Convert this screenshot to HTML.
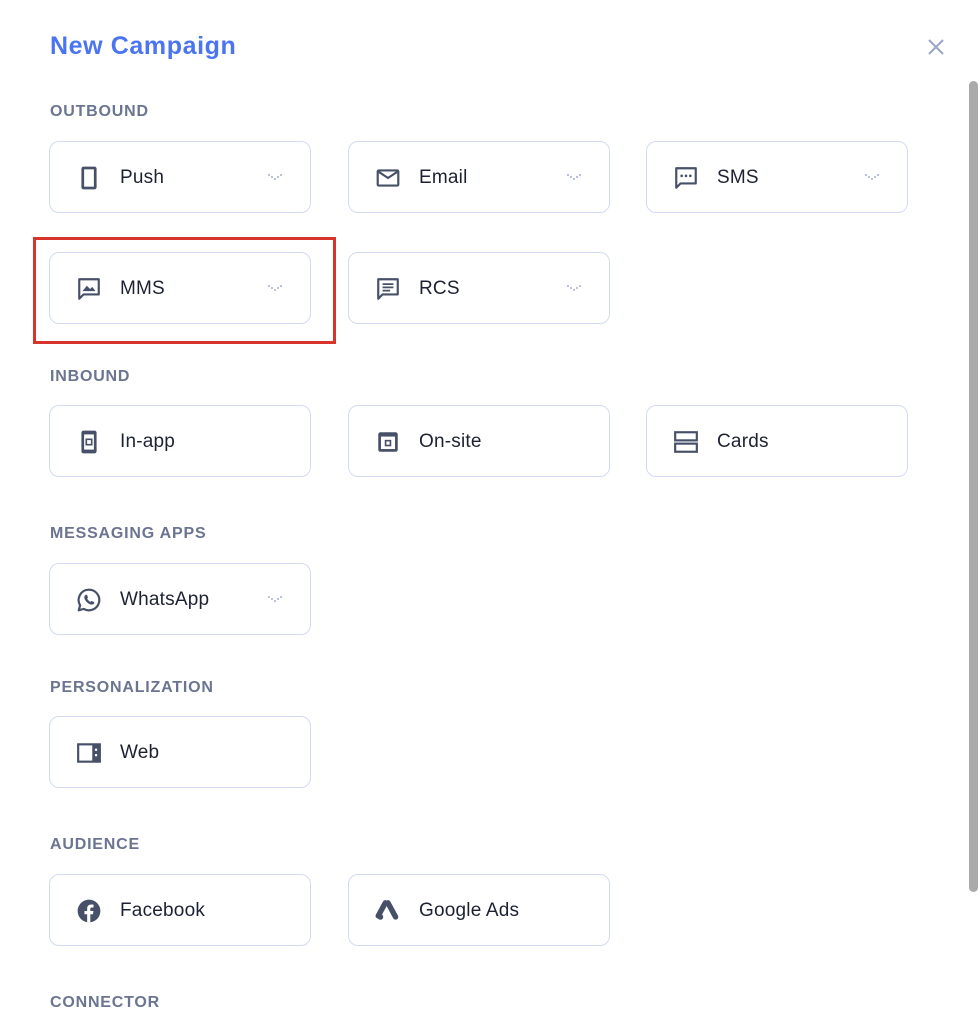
<!DOCTYPE html>
<html><head><meta charset="utf-8"><style>
body{margin:0;width:980px;height:1032px;background:#fff;position:relative;overflow:hidden;font-family:"Liberation Sans",sans-serif}
.t{position:absolute;left:50px;top:32px;font-size:25px;font-weight:bold;color:#4a74f0;letter-spacing:.6px}
.x{position:absolute;left:926px;top:37px}
.sb{position:absolute;left:969px;top:81px;width:9px;height:811px;background:#aaa;border-radius:5px}
.s{position:absolute;left:50px;font-size:16px;font-weight:bold;color:#6b7490;letter-spacing:.8px}
.c{position:absolute;width:260px;height:70px;border:1px solid #d3dbf3;border-radius:10px;box-sizing:content-box}
.c .i{position:absolute;left:26px;top:23px;width:26px;height:26px}
.c .l{position:absolute;left:70px;top:25px;font-size:19px;color:#1d2233;letter-spacing:.2px}
.c .v{position:absolute;left:217px;top:31px}
.red{position:absolute;left:33px;top:237px;width:297px;height:101px;border:3px solid #d8342c;box-sizing:content-box}
</style></head><body>
<div class="t">New Campaign</div>
<svg class="x" width="20" height="20" viewBox="0 0 20 20"><path d="M3 3L17 17M17 3L3 17" stroke="#9aa6c8" stroke-width="2"/></svg>
<div class="sb"></div>
<div class="s" style="top:103px">OUTBOUND</div>
<div class="s" style="top:368px">INBOUND</div>
<div class="s" style="top:525px">MESSAGING APPS</div>
<div class="s" style="top:679px">PERSONALIZATION</div>
<div class="s" style="top:836px">AUDIENCE</div>
<div class="s" style="top:994px">CONNECTOR</div>

<!-- row 1 -->
<div class="c" style="left:49px;top:141px"><svg class="i" viewBox="0 0 24 24"><rect x="5" y="1.5" width="14" height="21" rx="2" fill="#475069"/><rect x="7.5" y="4" width="9" height="16" fill="#fff"/></svg><div class="l">Push</div><svg class="v" width="16" height="10"><g fill="#a4aed0"><circle cx="2" cy="2" r="1"/><circle cx="5" cy="4" r="1"/><circle cx="8" cy="6" r="1"/><circle cx="11" cy="4" r="1"/><circle cx="14" cy="2" r="1"/></g></svg></div>
<div class="c" style="left:348px;top:141px"><svg class="i" viewBox="0 0 24 24"><rect x="2.5" y="5" width="19" height="14" rx="1" fill="none" stroke="#475069" stroke-width="2"/><path d="M3 6l9 6 9-6" fill="none" stroke="#475069" stroke-width="2"/></svg><div class="l">Email</div><svg class="v" width="16" height="10"><g fill="#a4aed0"><circle cx="2" cy="2" r="1"/><circle cx="5" cy="4" r="1"/><circle cx="8" cy="6" r="1"/><circle cx="11" cy="4" r="1"/><circle cx="14" cy="2" r="1"/></g></svg></div>
<div class="c" style="left:646px;top:141px"><svg class="i" viewBox="0 0 24 24"><path d="M3 3h18v14H7l-4 4z" fill="none" stroke="#475069" stroke-width="2" stroke-linejoin="round"/><g fill="#475069"><circle cx="8" cy="10" r="1.2"/><circle cx="12" cy="10" r="1.2"/><circle cx="16" cy="10" r="1.2"/></g></svg><div class="l">SMS</div><svg class="v" width="16" height="10"><g fill="#a4aed0"><circle cx="2" cy="2" r="1"/><circle cx="5" cy="4" r="1"/><circle cx="8" cy="6" r="1"/><circle cx="11" cy="4" r="1"/><circle cx="14" cy="2" r="1"/></g></svg></div>

<!-- row 2 -->
<div class="c" style="left:49px;top:252px"><svg class="i" viewBox="0 0 24 24"><path d="M3 3h18v14H7l-4 4z" fill="none" stroke="#475069" stroke-width="2" stroke-linejoin="round"/><path d="M6 14l4-5 3 3 2-2 3 4z" fill="#475069"/></svg><div class="l">MMS</div><svg class="v" width="16" height="10"><g fill="#a4aed0"><circle cx="2" cy="2" r="1"/><circle cx="5" cy="4" r="1"/><circle cx="8" cy="6" r="1"/><circle cx="11" cy="4" r="1"/><circle cx="14" cy="2" r="1"/></g></svg></div>
<div class="c" style="left:348px;top:252px"><svg class="i" viewBox="0 0 24 24"><path d="M3 3h18v14H7l-4 4z" fill="none" stroke="#475069" stroke-width="2" stroke-linejoin="round"/><path d="M7 7.5h10M7 10.5h10M7 13.5h7" stroke="#475069" stroke-width="1.6"/></svg><div class="l">RCS</div><svg class="v" width="16" height="10"><g fill="#a4aed0"><circle cx="2" cy="2" r="1"/><circle cx="5" cy="4" r="1"/><circle cx="8" cy="6" r="1"/><circle cx="11" cy="4" r="1"/><circle cx="14" cy="2" r="1"/></g></svg></div>
<div class="red"></div>

<!-- inbound -->
<div class="c" style="left:49px;top:405px"><svg class="i" viewBox="0 0 24 24"><rect x="5" y="1.5" width="14" height="21" rx="2" fill="#475069"/><rect x="7.5" y="5" width="9" height="14" fill="#fff"/><rect x="9.5" y="9.5" width="5" height="5" fill="none" stroke="#475069" stroke-width="1.5"/></svg><div class="l">In-app</div></div>
<div class="c" style="left:348px;top:405px"><svg class="i" viewBox="0 0 24 24"><rect x="3" y="3" width="18" height="18" rx="2" fill="#475069"/><rect x="5.5" y="7" width="13" height="11.5" fill="#fff"/><rect x="9" y="10" width="6" height="6" fill="#475069"/><rect x="10.5" y="11.5" width="3" height="3" fill="#fff"/></svg><div class="l">On-site</div></div>
<div class="c" style="left:646px;top:405px"><svg class="i" viewBox="0 0 24 24"><rect x="2" y="3" width="20" height="7.5" fill="none" stroke="#475069" stroke-width="2"/><rect x="2" y="13.5" width="20" height="7.5" fill="none" stroke="#475069" stroke-width="2"/></svg><div class="l">Cards</div></div>

<!-- whatsapp -->
<div class="c" style="left:49px;top:563px"><svg class="i" viewBox="0 0 24 24"><path d="M12 2.5a9.5 9.5 0 1 1-4.8 17.7L2.5 21.5l1.3-4.6A9.5 9.5 0 0 1 12 2.5z" fill="none" stroke="#475069" stroke-width="2" stroke-linejoin="round"/><path d="M8.5 7.5c.5-.5 1.5-.5 1.8.2l.7 1.6c.2.5-.4 1-.7 1.3.6 1.4 1.7 2.5 3.1 3.1.3-.3.8-.9 1.3-.7l1.6.7c.7.3.7 1.3.2 1.8-1 1-2.5 1-4 .3-2-1-3.6-2.6-4.5-4.6-.6-1.5-.5-2.7.5-3.7z" fill="#475069"/></svg><div class="l">WhatsApp</div><svg class="v" width="16" height="10"><g fill="#a4aed0"><circle cx="2" cy="2" r="1"/><circle cx="5" cy="4" r="1"/><circle cx="8" cy="6" r="1"/><circle cx="11" cy="4" r="1"/><circle cx="14" cy="2" r="1"/></g></svg></div>

<!-- web -->
<div class="c" style="left:49px;top:716px"><svg class="i" viewBox="0 0 24 24"><rect x="2" y="4" width="20" height="16" fill="none" stroke="#475069" stroke-width="2"/><rect x="15" y="4" width="7" height="16" fill="#475069"/><rect x="17.5" y="8" width="2" height="2" fill="#fff"/><rect x="17.5" y="13" width="2" height="2" fill="#fff"/></svg><div class="l">Web</div></div>

<!-- audience -->
<div class="c" style="left:49px;top:874px"><svg class="i" viewBox="0 0 24 24"><circle cx="12" cy="12" r="10.5" fill="#475069"/><path d="M13.2 22.5v-7.5h2.5l.4-3h-2.9v-1.8c0-.9.3-1.4 1.5-1.4h1.5V6.1c-.3 0-1.2-.1-2.2-.1-2.2 0-3.7 1.3-3.7 3.8V12H7.8v3h2.5v7.5z" fill="#fff"/></svg><div class="l">Facebook</div></div>
<div class="c" style="left:348px;top:874px"><svg class="i" viewBox="0 0 24 24"><path d="M9.5 4.5L3 16.5" stroke="#475069" stroke-width="5" stroke-linecap="round"/><path d="M12 4.5L19 17.5" stroke="#475069" stroke-width="5" stroke-linecap="round"/><circle cx="5" cy="17.5" r="2.6" fill="#475069"/></svg><div class="l">Google Ads</div></div>
</body></html>
